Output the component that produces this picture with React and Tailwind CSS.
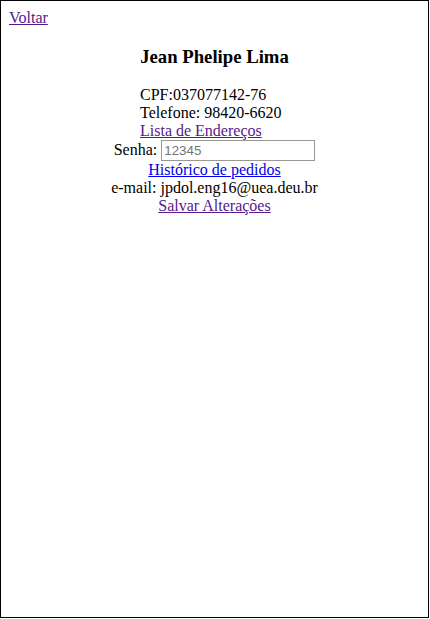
export default function App() {
  return (
    <div
      className="w-[429px] h-[618px] border border-black p-[8px] text-[16px] leading-[18px] text-black bg-white"
      style={{ fontFamily: '"Liberation Serif", "Times New Roman", serif' }}
    >
      <div>
        <a href="#" className="text-[#551a8b] underline">Voltar</a>
      </div>
      <h3 className="text-center font-bold text-[18.72px] leading-[21.5px] my-[18.72px]">Jean Phelipe Lima</h3>
      <div className="pl-[131px]">
        <div>CPF:037077142-76</div>
        <div>Telefone: 98420-6620</div>
        <div>
          <a href="#" className="text-[#551a8b] underline">Lista de Endereços</a>
        </div>
      </div>
      <div className="text-center h-[21px] flex items-center justify-center">
        <span>Senha:</span>
        <input
          type="text"
          placeholder="12345"
          className="ml-[4px] w-[154px] h-[21px] border border-[#999] px-[2px] text-[13.33px] placeholder:text-[#757575] outline-none"
          style={{ fontFamily: '"Liberation Sans", Arial, sans-serif' }}
        />
      </div>
      <div className="text-center">
        <a href="#" className="text-[#0000ee] underline">Histórico de pedidos</a>
      </div>
      <div className="text-center">e-mail: jpdol.eng16@uea.deu.br</div>
      <div className="text-center">
        <a href="#" className="text-[#551a8b] underline">Salvar Alterações</a>
      </div>
    </div>
  );
}
